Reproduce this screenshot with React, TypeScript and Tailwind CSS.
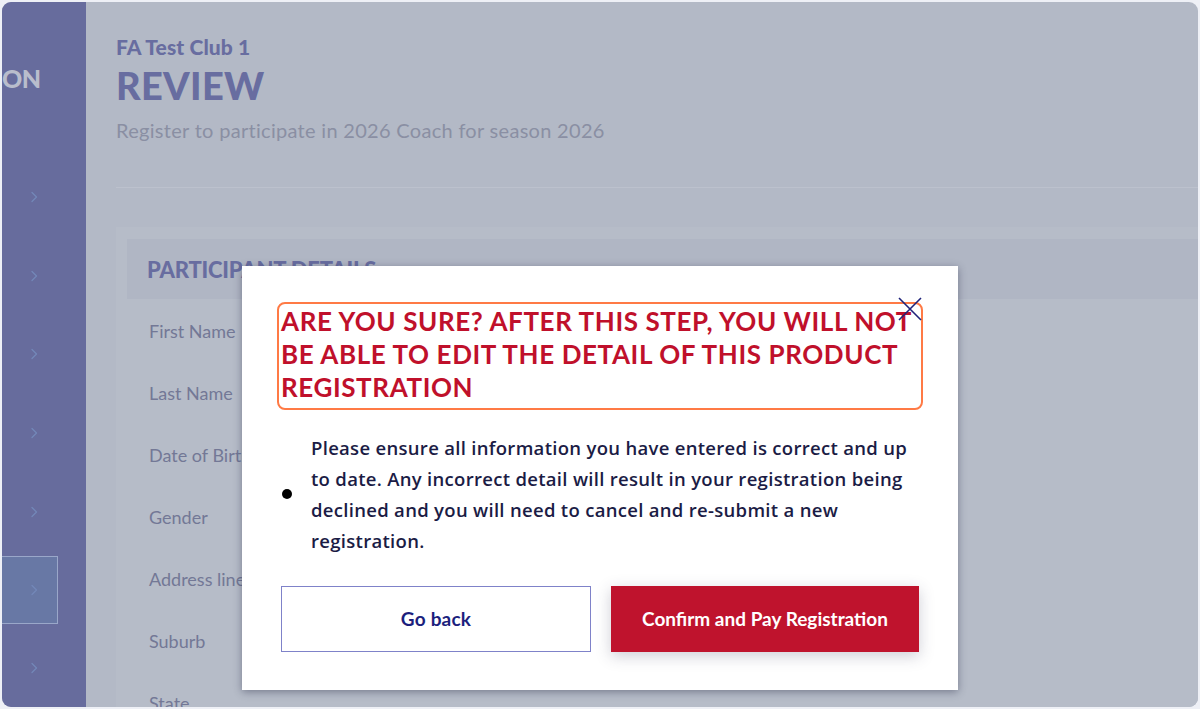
import React from "react";

const font = { fontFamily: "Lato, 'Noto Sans', sans-serif" };
const bodyFont = { fontFamily: "'Open Sans', Lato, sans-serif" };

function Chevron() {
  return (
    <svg width="8" height="12" viewBox="0 0 8 12" fill="none">
      <path d="M2 1.5 L6.5 6 L2 10.5" stroke="#7387b8" strokeWidth="1.3" strokeLinecap="round" strokeLinejoin="round" />
    </svg>
  );
}

const labels = ["First Name", "Last Name", "Date of Birth", "Gender", "Address line 1", "Suburb", "State"];

export default function App() {
  return (
    <div className="w-[1200px] h-[709px] bg-[#eef0f6] p-[2px]" style={font}>
      <div className="relative w-full h-full rounded-[9px] overflow-hidden flex bg-[#b3b9c6]">
        {/* sidebar */}
        <div className="w-[84px] h-full bg-[#676c9d] flex flex-col">
          <div className="h-[158px] pt-[60px] text-[#b9bdcc] font-black text-[25px] leading-[32px] tracking-[-0.5px]">ON</div>
          <div className="flex flex-col">
            {[0, 1, 2, 3, 4].map((i) => (
              <div key={i} className="h-[78.7px] flex items-center pl-[28px]">
                <Chevron />
              </div>
            ))}
            <div className="h-[68px] w-[56px] mt-[5px] mb-[5px] border border-[#9aa7c9] border-l-0 bg-[#6878a5] flex items-center pl-[28px]">
              <Chevron />
            </div>
            <div className="h-[78px] flex items-center pl-[28px]">
              <Chevron />
            </div>
          </div>
        </div>
        {/* main */}
        <div className="flex-1 h-full pl-[30px] pt-[32px]">
          <div className="text-[21px] leading-[26px] font-black text-[#686da0] tracking-[0.1px]">FA Test Club 1</div>
          <div className="text-[38px] leading-[46px] font-black text-[#686da0] mt-[2px] tracking-[0.3px]">REVIEW</div>
          <div className="text-[20px] leading-[26px] text-[#8a8fa3] mt-[9px] tracking-[0.3px]">Register to participate in 2026 Coach for season 2026</div>
          <div className="h-[1px] bg-[#bcc1cd] mt-[44px]" />
          <div className="mt-[39px] bg-[#b6bcc8] pl-[11px] pt-[12px] h-[500px]">
            <div className="h-[60px] bg-[#b0b6c4] pl-[20px] flex items-center">
              <span className="text-[22px] font-black text-[#686da0] tracking-[-0.2px]">PARTICIPANT DETAILS</span>
            </div>
            <div className="flex flex-col pl-[22px] pt-[20px]">
              {labels.map((l) => (
                <div key={l} className="h-[62px] text-[18px] leading-[24px] text-[#737896]">{l}</div>
              ))}
            </div>
          </div>
        </div>

        {/* modal */}
        <div className="absolute left-[240px] top-[264px] w-[716px] h-[424px] bg-white shadow-[0_2px_8px_rgba(40,45,70,0.45)] px-[35px] pt-[36px]">
          <div className="relative border-[2.5px] border-[#ff7a45] rounded-[8px] px-[2px] pt-[1px] pb-[4px]">
            <div className="text-[#c0102b] text-[26px] leading-[33px] font-bold uppercase tracking-[0.6px]">
              Are you sure? After this step, you will not be able to edit the detail of this product registration
            </div>
            <svg className="absolute right-[-2px] top-[-8px]" width="26" height="26" viewBox="0 0 26 26">
              <path d="M2 2 L24 24 M24 2 L2 24" stroke="#1f237a" strokeWidth="1.6" />
            </svg>
          </div>
          <div className="mt-[22px] flex items-center">
            <div className="w-[10px] h-[10px] rounded-full bg-black ml-[5px] mr-[19px] shrink-0" />
            <p className="text-[18.5px] leading-[31px] text-[#1b1c45] font-semibold pr-[4px] tracking-[0.3px]" style={bodyFont}>
              Please ensure all information you have entered is correct and up to date. Any incorrect detail will result in your registration being declined and you will need to cancel and re-submit a new registration.
            </p>
          </div>
          <div className="mt-[30px] flex gap-[20px] pl-[4px] pr-[4px]">
            <button className="flex-1 h-[66px] border border-[#7f82c9] bg-white text-[#1c1f7d] text-[19px] font-bold tracking-[0.2px]">Go back</button>
            <button className="flex-1 h-[66px] bg-[#bf132d] text-white text-[19px] font-bold shadow-[0_4px_14px_rgba(60,60,90,0.25)] tracking-[0px]">Confirm and Pay Registration</button>
          </div>
        </div>
      </div>
    </div>
  );
}
